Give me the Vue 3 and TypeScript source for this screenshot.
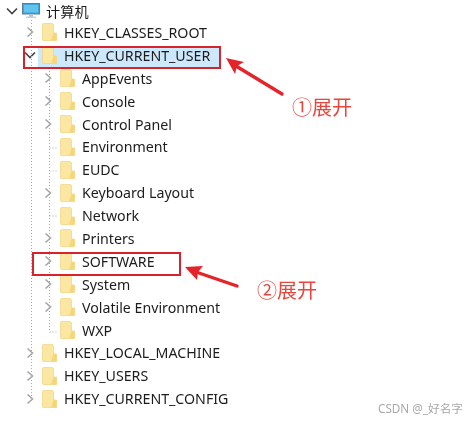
<script setup lang="ts">
interface TreeRow {
  label: string;
  level: number;
  arrow: 'open' | 'closed' | 'none';
  selected?: boolean;
}

const rows: TreeRow[] = [
  { label: 'HKEY_CLASSES_ROOT', level: 1, arrow: 'closed' },
  { label: 'HKEY_CURRENT_USER', level: 1, arrow: 'open', selected: true },
  { label: 'AppEvents', level: 2, arrow: 'closed' },
  { label: 'Console', level: 2, arrow: 'closed' },
  { label: 'Control Panel', level: 2, arrow: 'closed' },
  { label: 'Environment', level: 2, arrow: 'none' },
  { label: 'EUDC', level: 2, arrow: 'none' },
  { label: 'Keyboard Layout', level: 2, arrow: 'closed' },
  { label: 'Network', level: 2, arrow: 'none' },
  { label: 'Printers', level: 2, arrow: 'closed' },
  { label: 'SOFTWARE', level: 2, arrow: 'closed' },
  { label: 'System', level: 2, arrow: 'closed' },
  { label: 'Volatile Environment', level: 2, arrow: 'closed' },
  { label: 'WXP', level: 2, arrow: 'none' },
  { label: 'HKEY_LOCAL_MACHINE', level: 1, arrow: 'closed' },
  { label: 'HKEY_USERS', level: 1, arrow: 'closed' },
  { label: 'HKEY_CURRENT_CONFIG', level: 1, arrow: 'closed' },
];
</script>

<template>
  <div class="page">
    <div class="tree">
      <div class="row root">
        <svg class="chev" width="14" height="14" viewBox="0 0 14 14">
          <path d="M2 4.5 L7 9.5 L12 4.5" fill="none" stroke="#444" stroke-width="1.6" />
        </svg>
        <svg class="computer" width="18" height="16" viewBox="0 0 18 16">
          <rect x="0.5" y="0.5" width="17" height="10.5" fill="#3aa5da" stroke="#5c7f96" />
          <rect x="2" y="2" width="14" height="7.5" fill="#62c3ec" />
          <rect x="7" y="11" width="4" height="3" fill="#a9c4d6" />
          <rect x="4" y="13.5" width="10" height="1.5" fill="#c3d3de" />
        </svg>
        <span class="label">计算机</span>
      </div>

      <div
        v-for="row in rows"
        :key="row.label"
        class="row"
        :class="[`level-${row.level}`, { selected: row.selected }]"
      >
        <svg v-if="row.arrow === 'closed'" class="chev" width="14" height="14" viewBox="0 0 14 14">
          <path d="M4.5 2.5 L9.5 7 L4.5 11.5" fill="none" stroke="#a6a6a6" stroke-width="1.6" />
        </svg>
        <svg v-else-if="row.arrow === 'open'" class="chev" width="14" height="14" viewBox="0 0 14 14">
          <path d="M2 4.5 L7 9.5 L12 4.5" fill="none" stroke="#444" stroke-width="1.6" />
        </svg>
        <span v-else class="chev"></span>
        <svg class="folder" width="15" height="18" viewBox="0 0 15 18">
          <path d="M0.5 1.5 Q0.5 0.5 1.5 0.5 L10.5 0.5 L11.5 2 L11.5 10 L14.5 10 L14.5 17.5 L1.5 17.5 Q0.5 17.5 0.5 16.5 Z" fill="#fce7a2" stroke="#efd27c" stroke-width="0.7" />
          <path d="M11.5 10 L14.5 10 L14.5 17.5 L9 17.5 Z" fill="#f6d679" />
        </svg>
        <span class="label">{{ row.label }}</span>
      </div>
    </div>

    <!-- dotted guide lines of the tree -->
    <svg class="guides" width="80" height="421" viewBox="0 0 80 421">
      <g fill="none" stroke="#a8a8a8" stroke-dasharray="1 2">
        <path d="M31.5 20 V400" />
        <path d="M49.5 68 V332 H57" />
        <path d="M49.5 148 H57 M49.5 171 H57 M49.5 216 H57" />
      </g>
    </svg>

    <!-- annotations -->
    <div class="mark mark-one"></div>
    <div class="mark mark-two"></div>
    <svg class="arrows" width="474" height="421" viewBox="0 0 474 421">
      <g stroke="#e5242a" stroke-width="3.4" fill="none" stroke-linecap="round">
        <path d="M282 94 L236 66" />
        <path d="M237 286 L196 272" />
      </g>
      <path d="M226 58 L244 62 L237 66 L235 74 Z" fill="#e5242a" />
      <path d="M185 267 L203 266 L198 272 L197 280 Z" fill="#e5242a" />
    </svg>
    <span class="note note-one">①展开</span>
    <span class="note note-two">②展开</span>
    <span class="watermark">CSDN @_好名字</span>
  </div>
</template>

<style>
body {
  margin: 0;
  background: #fff;
}
</style>

<style scoped>
.page {
  position: relative;
  width: 474px;
  height: 421px;
  overflow: hidden;
  background: #fff;
  font-family: "Noto Sans", "Noto Sans CJK SC", sans-serif;
  color: #1c1c1c;
  filter: blur(0.35px);
}

.tree {
  display: flex;
  flex-direction: column;
}

.row {
  display: flex;
  align-items: center;
  height: 22.9px;
  font-size: 14.2px;
  white-space: nowrap;
}

.root {
  height: 21px;
  padding-left: 5px;
}

.level-1 {
  padding-left: 23px;
}

.level-2 {
  padding-left: 41px;
}

.selected {
  background: linear-gradient(#cde8fb, #cde8fb) no-repeat 38px 3px / 181px 20px;
}

.chev {
  width: 14px;
  height: 14px;
  flex: none;
}

.computer {
  margin-left: 3px;
  margin-right: 6px;
  flex: none;
}

.folder {
  margin-left: 5px;
  margin-right: 7px;
  flex: none;
}

.guides {
  position: absolute;
  left: 0;
  top: 0;
}

.mark {
  position: absolute;
  border: 2px solid #d8232a;
  box-sizing: border-box;
}

.mark-one {
  left: 23px;
  top: 46px;
  width: 198px;
  height: 23px;
}

.mark-two {
  left: 32px;
  top: 252px;
  width: 149px;
  height: 24px;
}

.arrows {
  position: absolute;
  left: 0;
  top: 0;
}

.note {
  position: absolute;
  font-size: 20px;
  line-height: 24px;
  color: #e8453c;
  white-space: nowrap;
}

.note-one {
  left: 292px;
  top: 96px;
}

.note-two {
  left: 257px;
  top: 279px;
}

.watermark {
  position: absolute;
  left: 378px;
  top: 400px;
  font-size: 11.7px;
  line-height: 16px;
  color: #a9a9a9;
  white-space: nowrap;
}
</style>
